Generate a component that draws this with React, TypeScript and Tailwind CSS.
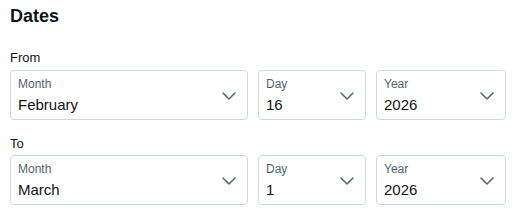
import React from 'react';
import { ChevronDown } from 'lucide-react';

interface SelectBoxProps {
  label: string;
  value: string;
  width: string;
}

const SelectBox: React.FC<SelectBoxProps> = ({ label, value, width }) => (
  <div className={`relative h-[50px] shrink-0 rounded-[4px] border border-[#cfd9de] ${width}`}>
    <div className="pl-[7px] pt-[5px]">
      <div className="text-[12px] leading-4 text-[#536471]">{label}</div>
      <div className="mt-[3px] text-[15px] leading-5 text-[#0f1419]">{value}</div>
    </div>
    <ChevronDown
      className="absolute right-[6px] top-[13px] text-[#536471]"
      size={24}
      strokeWidth={1.5}
    />
  </div>
);

const DateRow: React.FC<{ month: string; day: string; year: string }> = ({ month, day, year }) => (
  <div className="flex gap-[10px]">
    <SelectBox label="Month" value={month} width="w-[238px]" />
    <SelectBox label="Day" value={day} width="w-[108px]" />
    <SelectBox label="Year" value={year} width="w-[130px]" />
  </div>
);

export default function App() {
  return (
    <div
      className="h-[219px] w-[512px] bg-white pl-[10px] pt-[6px]"
      style={{ fontFamily: '"Liberation Sans", Arial, sans-serif' }}
    >
      <h2 className="text-[18px] font-bold leading-5 text-[#0f1419]">Dates</h2>
      <div className="mb-[4px] mt-[24px] text-[13px] leading-4 text-[#0f1419]">From</div>
      <DateRow month="February" day="16" year="2026" />
      <div className="mb-[3px] mt-[16px] text-[13px] leading-4 text-[#0f1419]">To</div>
      <DateRow month="March" day="1" year="2026" />
    </div>
  );
}
